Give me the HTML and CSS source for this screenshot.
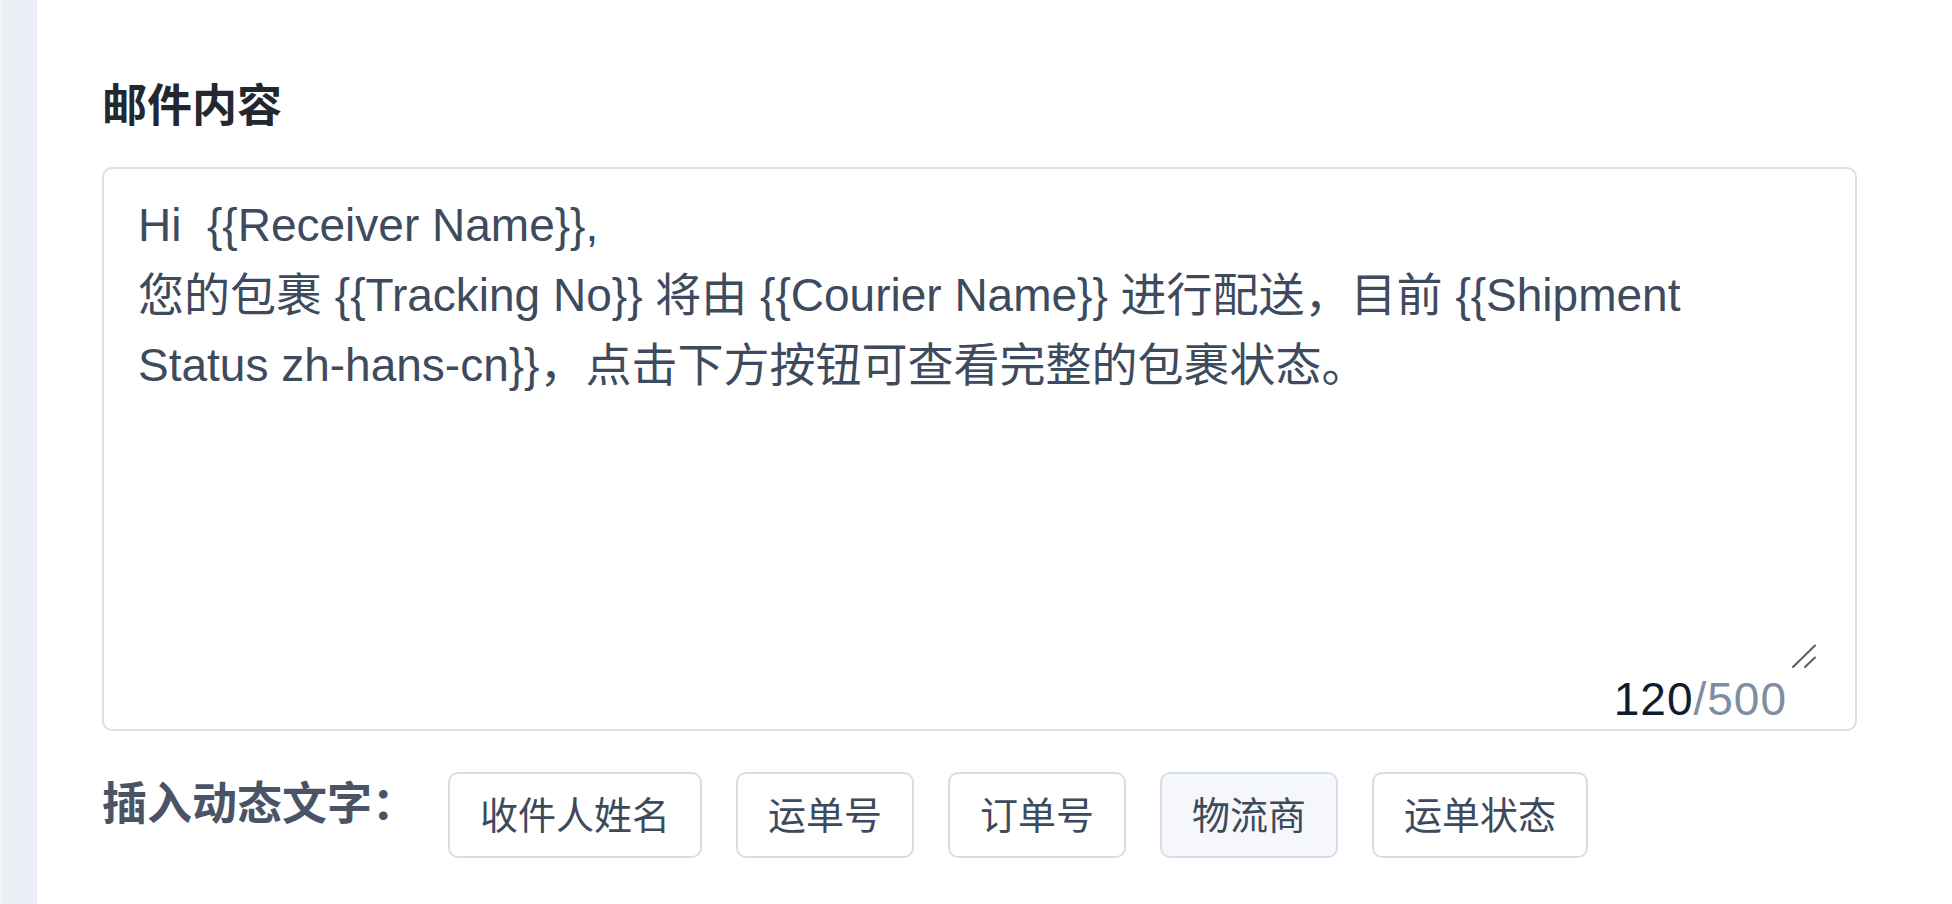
FILE: index.html
```html
<!DOCTYPE html>
<html lang="zh-CN">
<head>
<meta charset="utf-8">
<title>邮件内容</title>
<link rel="stylesheet" href="styles.css">
</head>
<body>
  <div class="layout">
    <aside class="rail"></aside>
    <main class="panel">
      <h2 class="field-title">邮件内容</h2>

      <div class="editor">
        <div class="editor-body">
          <textarea class="editor-input" maxlength="500" spellcheck="false">Hi  {{Receiver Name}},
您的包裹 {{Tracking No}} 将由 {{Courier Name}} 进行配送，目前 {{Shipment Status zh-hans-cn}}，点击下方按钮可查看完整的包裹状态。</textarea>
          <svg class="grip" width="24" height="24" viewBox="0 0 24 24" aria-hidden="true">
            <path d="M1 23 L23 1.5 M13 23 L23 13.5" fill="none" stroke="#5a5d63" stroke-width="2" stroke-linecap="round"/>
          </svg>
        </div>
        <div class="counter"><span class="count-used">120</span><span class="count-max">/500</span></div>
      </div>

      <div class="insert-row">
        <span class="insert-label">插入动态文字：</span>
        <div class="chips">
          <button class="chip" type="button">收件人姓名</button>
          <button class="chip" type="button">运单号</button>
          <button class="chip" type="button">订单号</button>
          <button class="chip chip-hover" type="button">物流商</button>
          <button class="chip" type="button">运单状态</button>
        </div>
      </div>
    </main>
  </div>
</body>
</html>
```

FILE: styles.css
```css
html, body {
  margin: 0;
  padding: 0;
  background: #ffffff;
}

body {
  font-family: "Liberation Sans", "Noto Sans CJK SC", sans-serif;
  color: #3e4a5d;
}

.layout {
  display: flex;
  min-height: 100vh;
}

.rail {
  width: 34px;
  flex: 0 0 34px;
  background: #ecf0f6;
  border-left: 3px solid #f2f4f8;
}

.panel {
  flex: 1;
  padding: 80px 95px 0 65px;
}

.field-title {
  margin: 0 0 33px;
  font-size: 45px;
  line-height: 54px;
  font-weight: 700;
  color: #23272f;
}

.editor {
  border: 2px solid #d6e0ec;
  border-radius: 10px;
  padding: 21px 36px 2px 34px;
  background: #ffffff;
}

.editor-body {
  position: relative;
}

.editor-input {
  display: block;
  box-sizing: border-box;
  width: 100%;
  height: 482px;
  margin: 0;
  padding: 0 40px 0 0;
  border: 0;
  outline: none;
  resize: none;
  overflow-y: auto;
  background: transparent;
  font-family: "Liberation Sans", "Noto Sans CJK SC", sans-serif;
  font-size: 46px;
  line-height: 70px;
  color: #3e4a5d;
}

/* resize handle drawn in the lower right corner of the text box */
.grip {
  position: absolute;
  right: 3px;
  bottom: 4px;
  display: block;
}

.counter {
  text-align: right;
  padding-right: 32px;
  font-size: 46px;
  line-height: 55px;
  letter-spacing: 1px;
}

.count-used {
  color: #101b30;
}

.count-max {
  color: #7f8da3;
}

.insert-row {
  display: flex;
  align-items: flex-start;
  margin-top: 41px;
}

.insert-label {
  padding-top: 6px;
  margin-right: 31px;
  font-size: 45px;
  line-height: 54px;
  font-weight: 700;
  color: #4a5466;
}

.chips {
  display: flex;
  gap: 34px;
}

.chip {
  height: 86px;
  padding: 2px 30px 0;
  border: 2px solid #d5dfeb;
  border-radius: 10px;
  background: #ffffff;
  font-family: "Liberation Sans", "Noto Sans CJK SC", sans-serif;
  font-size: 38px;
  line-height: 80px;
  color: #3d4a5c;
  cursor: pointer;
}

.chip-hover {
  background: #f5f7fa;
}
```
